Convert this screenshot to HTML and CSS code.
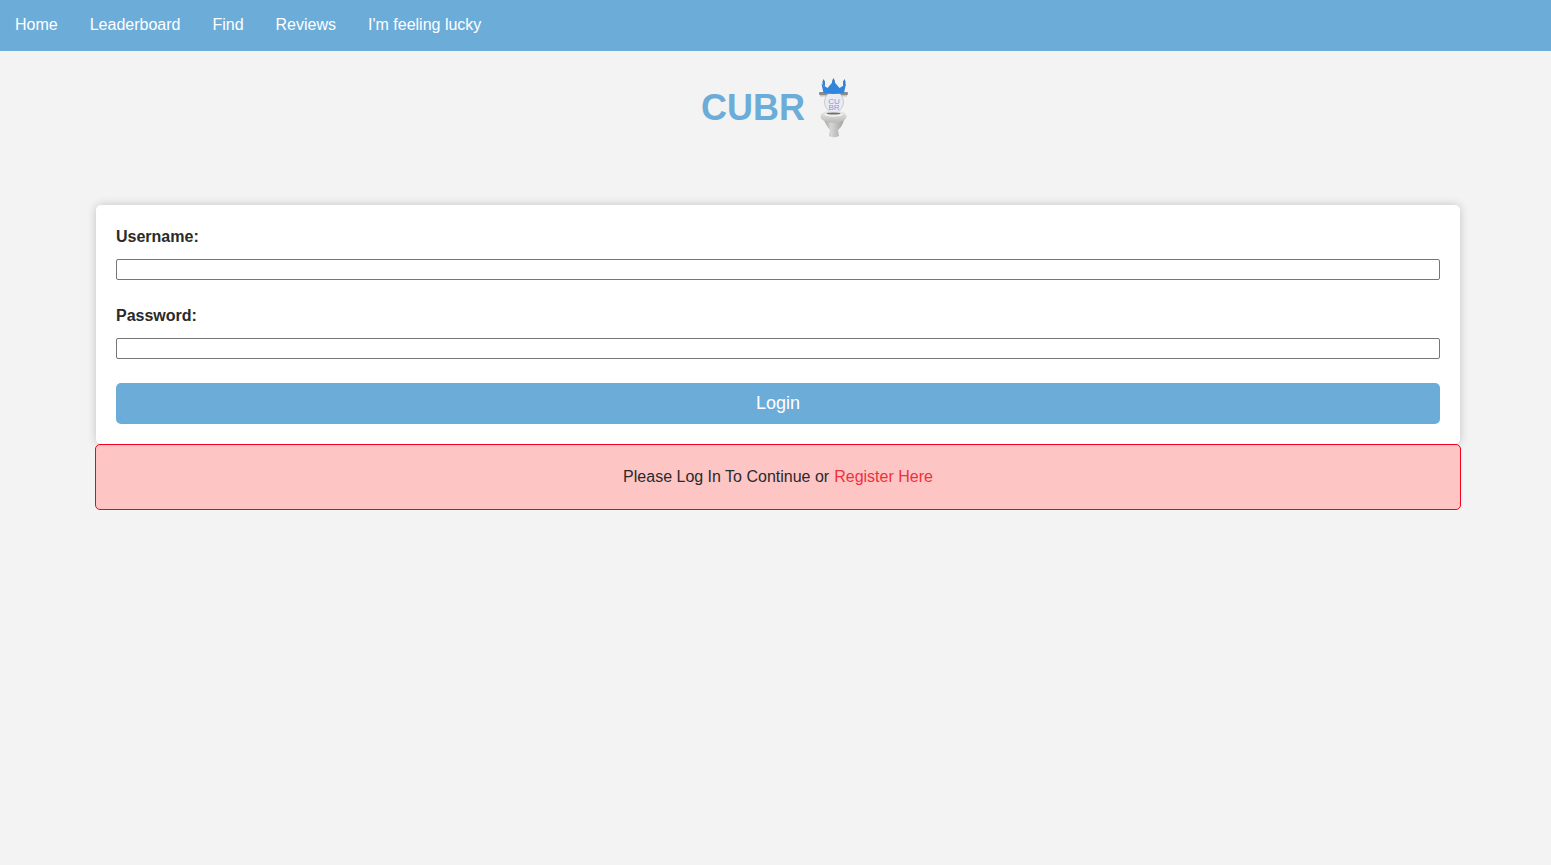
FILE: index.html
```html
<!DOCTYPE html>
<html lang="en">
<head>
    <meta charset="UTF-8">
    <meta name="viewport" content="width=device-width, initial-scale=1.0">
    <title>CUBR - Login</title>
    <link rel="stylesheet" href="styles.css">
</head>
<body>
    <div class="navbar">
        <a href="#">Home</a>
        <a href="#">Leaderboard</a>
        <a href="#">Find</a>
        <a href="#">Reviews</a>
        <a href="#">I'm feeling lucky</a>
    </div>

    <div class="logo">
        <span class="logo-text">CUBR</span>
        <svg class="logo-icon" width="34" height="60" viewBox="0 0 34 60">
            <defs>
                <linearGradient id="porcelain" x1="0" y1="0" x2="1" y2="0">
                    <stop offset="0" stop-color="#9f9f9d"/>
                    <stop offset="0.35" stop-color="#d6d6d5"/>
                    <stop offset="1" stop-color="#a0a09e"/>
                </linearGradient>
                <linearGradient id="bowl" x1="0" y1="0" x2="0" y2="1">
                    <stop offset="0" stop-color="#ececeb"/>
                    <stop offset="1" stop-color="#b9b9b7"/>
                </linearGradient>
            </defs>
            <rect x="3" y="14" width="29" height="3" rx="1" fill="#8b8b89"/>
            <rect x="4" y="17" width="27" height="1.5" fill="#c4c4c2"/>
            <ellipse cx="18" cy="24" rx="9.5" ry="10.5" fill="#e9ebf3" stroke="#c2c2c2" stroke-width="0.8"/>
            <path d="M7.5 15 L5.5 6 L11.5 10 L17.5 3 L23.5 10 L30 6 L28 15 Q18 17 7.5 15 Z" fill="#2f86dc"/>
            <path d="M6.5 7 L6.5 3.5 L7.5 1 L9 3.5 L9 8 Z M16 5 L16.2 2.5 L17.5 0 L18.8 2.5 L19 5 Z M27 8 L27 3.5 L28.5 1 L29.5 3.5 L29.5 7 Z" fill="#3a7fc8"/>
            <text class="tank-text" x="18" y="25.5" text-anchor="middle">CU</text>
            <text class="tank-text" x="18" y="32" text-anchor="middle">BR</text>
            <path d="M8 42 Q11 49 14 52 L13 58 Q18 60.5 23 58 L22 52 Q26 49 28 42 Z" fill="url(#porcelain)"/>
            <ellipse cx="17.5" cy="38.5" rx="13" ry="6.2" fill="url(#bowl)"/>
            <ellipse cx="17.5" cy="36.5" rx="9.5" ry="2.2" fill="#f0f0ef"/>
            <ellipse cx="17.5" cy="35.5" rx="7" ry="1.1" fill="#6f6f72"/>
        </svg>
    </div>

    <div class="container">
        <form class="login-form">
            <label for="username">Username:</label>
            <input type="text" id="username">
            <label for="password">Password:</label>
            <input type="password" id="password">
            <button type="button">Login</button>
        </form>
        <div class="alert">Please Log In To Continue or <a href="#">Register Here</a></div>
    </div>
</body>
</html>
```

FILE: styles.css
```css
body {
    background: #f3f3f3;
    color: #2a2a2a;
    font-family: 'Liberation Sans', Arial, sans-serif;
    margin: 0;
}
.navbar {
    background: #6cacd9;
    height: 49px;
    padding: 0 0 2px 15px;
    display: flex;
    align-items: center;
    gap: 32px;
}
.navbar a {
    color: #fff;
    text-decoration: none;
    font-size: 16px;
}
.logo {
    display: flex;
    justify-content: center;
    align-items: center;
    gap: 11px;
    margin-top: 27px;
    height: 60px;
}
.logo-text {
    color: #6cacd9;
    font-size: 36px;
    font-weight: bold;
}
.tank-text {
    fill: #7f9be0;
    font-size: 8px;
    font-family: 'Liberation Sans', Arial, sans-serif;
}
.container {
    margin: 67px 90px 0 95px;
}
.login-form {
    background: #fff;
    margin: 0 1px;
    padding: 21px 20px 20px;
    border-radius: 5px;
    box-shadow: 0 0 10px rgba(0, 0, 0, 0.2);
    height: 239px;
    box-sizing: border-box;
}
.login-form label {
    display: block;
    font-weight: bold;
    font-size: 16px;
    line-height: 22px;
    margin-bottom: 11px;
}
.login-form input {
    display: block;
    width: 100%;
    height: 21px;
    box-sizing: border-box;
    margin: 0 0 25px;
    padding: 1px 2px;
    border: 1px solid #767676;
    border-radius: 2px;
    background: #fff;
}
.login-form input:last-of-type {
    margin-bottom: 24px;
}
.login-form button {
    display: block;
    width: 100%;
    height: 41px;
    background: #6cacd9;
    color: #fff;
    border: none;
    border-radius: 5px;
    font-family: inherit;
    font-size: 18px;
    cursor: pointer;
}
.alert {
    background: #fec5c5;
    border: 1px solid #f5001e;
    border-radius: 5px;
    height: 66px;
    box-sizing: border-box;
    display: flex;
    align-items: center;
    justify-content: center;
    gap: 5px;
    font-size: 16px;
}
.alert a {
    color: #f0303c;
    text-decoration: none;
}
```
